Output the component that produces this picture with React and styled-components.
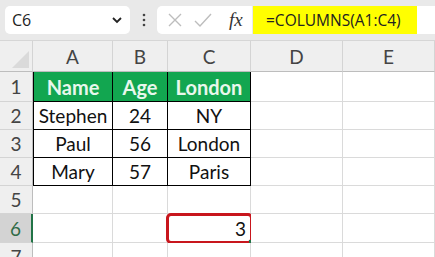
import styled, { createGlobalStyle } from "styled-components";

const GlobalStyle = createGlobalStyle`
  body {
    margin: 0;
    background: #ffffff;
    font-family: "Lato", "Liberation Sans", sans-serif;
  }
`;

const Page = styled.div`
  width: 435px;
  height: 257px;
  overflow: hidden;
  background: #ffffff;
`;

const Toolbar = styled.div`
  height: 41px;
  box-sizing: border-box;
  background: #e9e9e9;
  display: flex;
  align-items: center;
  padding: 0 0 0 5px;
  border-bottom: 1px solid #d6d6d6;
`;

const NameBox = styled.div`
  width: 125px;
  height: 28px;
  box-sizing: border-box;
  background: #ffffff;
  border-radius: 5px;
  display: flex;
  align-items: center;
  justify-content: space-between;
  padding: 0 7px 0 7px;
  font-family: "Open Sans", "Liberation Sans", sans-serif;
  font-size: 16px;
  color: #222;
`;

const Dots = styled.div`
  width: 27px;
  display: flex;
  justify-content: center;
`;

const FormulaIcons = styled.div`
  width: 95px;
  height: 28px;
  box-sizing: border-box;
  background: #ffffff;
  border-radius: 5px 0 0 5px;
  display: flex;
  align-items: center;
  gap: 10px;
  padding-left: 10px;
`;

const Fx = styled.span`
  font-family: "Liberation Serif", serif;
  font-style: italic;
  font-size: 19px;
  color: #333;
  margin-left: 6px;
`;

const FormulaInput = styled.div`
  flex: 1;
  height: 28px;
  margin-left: 1px;
  background: #ffffff;
  display: flex;
`;

const Highlight = styled.div`
  width: 164px;
  background: #ffff00;
  display: flex;
  align-items: center;
  padding-left: 13px;
  box-sizing: border-box;
  font-family: "Open Sans", "Liberation Sans", sans-serif;
  font-size: 15.5px;
  color: #222;
`;

const Grid = styled.div`
  display: grid;
  grid-template-columns: 33px 80px 55px 83px 92px 92px;
  grid-template-rows: 31px 30px 28px 28px 28px 28px 29px 28px;
`;

const Corner = styled.div`
  background: #efefef;
  border-right: 1px solid #d4d4d4;
  border-bottom: 1px solid #bdbdbd;
  position: relative;
  &::after {
    content: "";
    position: absolute;
    right: 3px;
    bottom: 3px;
    border-left: 17px solid transparent;
    border-bottom: 17px solid #dadada;
  }
`;

const ColHead = styled.div`
  background: #efefef;
  border-right: 1px solid #d4d4d4;
  border-bottom: 1px solid #bdbdbd;
  display: flex;
  align-items: center;
  justify-content: center;
  font-size: 19px;
  color: #444;
`;

const RowHead = styled.div`
  background: ${(p) => (p.$active ? "#d3d3d3" : "#efefef")};
  border-right: ${(p) => (p.$active ? "2px solid #217346" : "1px solid #bdbdbd")};
  border-bottom: 1px solid #d4d4d4;
  display: flex;
  align-items: center;
  justify-content: center;
  font-size: 19px;
  color: ${(p) => (p.$active ? "#2f6b46" : "#444")};
`;

const Cell = styled.div`
  box-sizing: border-box;
  display: flex;
  align-items: center;
  justify-content: ${(p) => (p.$right ? "flex-end" : "center")};
  padding: 0 4px;
  font-size: 19px;
  color: #111;
  border-right: 1px solid ${(p) => (p.$table ? "#000" : "#dadada")};
  border-bottom: 1px solid ${(p) => (p.$table ? "#000" : "#dadada")};
  background: ${(p) => (p.$head ? "#12a650" : "#fff")};
  ${(p) => p.$head && "color: #e8f7ec; font-weight: 700; font-size: 20px;"}
  ${(p) => p.$first && "border-left: 1px solid #000;"}
  position: relative;
`;

const Selected = styled.div`
  position: absolute;
  inset: -1px -3px -2px -2px;
  border: 3px solid #c8161d;
  border-radius: 5px;
  display: flex;
  align-items: center;
  justify-content: flex-end;
  padding-right: 4px;
  &::after {
    content: "";
    position: absolute;
    right: -3px;
    bottom: -3px;
    width: 4px;
    height: 4px;
    background: #217346;
  }
`;

const columns = ["A", "B", "C", "D", "E"];

const rows = [
  ["Name", "Age", "London"],
  ["Stephen", "24", "NY"],
  ["Paul", "56", "London"],
  ["Mary", "57", "Paris"],
];

export default function App() {
  return (
    <Page>
      <GlobalStyle />
      <Toolbar>
        <NameBox>
          C6
          <svg width="12" height="8" viewBox="0 0 12 8">
            <path d="M2 2 L6 6 L10 2" fill="none" stroke="#222" strokeWidth="1.8" />
          </svg>
        </NameBox>
        <Dots>
          <svg width="4" height="14" viewBox="0 0 4 14">
            <circle cx="2" cy="2" r="1.3" fill="#444" />
            <circle cx="2" cy="7" r="1.3" fill="#444" />
            <circle cx="2" cy="12" r="1.3" fill="#444" />
          </svg>
        </Dots>
        <FormulaIcons>
          <svg width="16" height="16" viewBox="0 0 16 16">
            <path d="M2 2 L14 14 M14 2 L2 14" stroke="#bdbdbd" strokeWidth="1.4" />
          </svg>
          <svg width="20" height="16" viewBox="0 0 20 16">
            <path d="M2 9 L7 14 L18 2" fill="none" stroke="#bdbdbd" strokeWidth="1.4" />
          </svg>
          <Fx>fx</Fx>
        </FormulaIcons>
        <FormulaInput>
          <Highlight>=COLUMNS(A1:C4)</Highlight>
        </FormulaInput>
      </Toolbar>
      <Grid>
        <Corner />
        {columns.map((c) => (
          <ColHead key={c}>{c}</ColHead>
        ))}
        {[1, 2, 3, 4, 5, 6, 7, 8].map((r) => {
          const data = rows[r - 1];
          return [
            <RowHead key={"h" + r} $active={r === 6}>
              {r}
            </RowHead>,
            ...[0, 1, 2, 3, 4].map((ci) => {
              const inTable = data && ci < 3;
              return (
                <Cell
                  key={r + "-" + ci}
                  $table={inTable}
                  $head={r === 1 && ci < 3}
                  $first={inTable && ci === 0}
                  $right={r === 6 && ci === 2}
                >
                  {inTable ? data[ci] : null}
                  {r === 6 && ci === 2 ? <Selected>3</Selected> : null}
                </Cell>
              );
            }),
          ];
        })}
      </Grid>
    </Page>
  );
}
